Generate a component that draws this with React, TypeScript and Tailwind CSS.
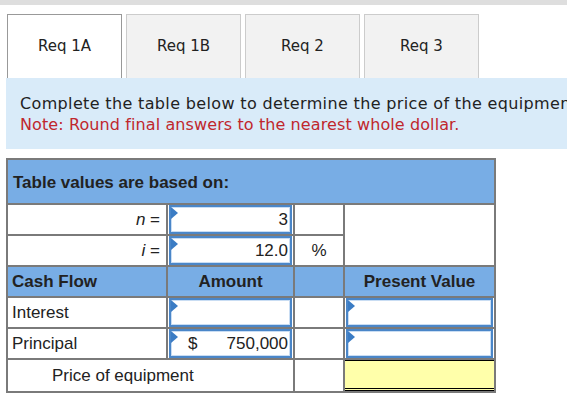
import React from "react";

const Tri = () => (
  <span className="absolute left-0 top-0 w-0 h-0 border-t-[6px] border-b-[6px] border-l-[7px] border-t-transparent border-b-transparent border-l-[#3b7cc4]" />
);

const InputBox = ({ children, className = "" }: { children?: React.ReactNode; className?: string }) => (
  <div className={`relative h-[29px] mx-px border-2 border-[#4a86c8] bg-white shadow-[inset_0_0_0_1px_#c9ddf3] flex items-center ${className}`}>
    <Tri />
    {children}
  </div>
);

const tabs = ["Req 1A", "Req 1B", "Req 2", "Req 3"];
const cell = "border-2 border-[#7a7a7a]";

export default function App() {
  return (
    <div className="w-[567px] h-[396px] bg-white overflow-hidden relative" style={{ fontFamily: '"Liberation Sans", Arial, sans-serif' }}>
      <div className="h-[5px] bg-[#dedede]" />
      <div className="flex gap-[4px] pl-[7px] mt-[9px]" style={{ fontFamily: '"DejaVu Sans", Verdana, sans-serif' }}>
        {tabs.map((t, i) => (
          <div
            key={t}
            className={`w-[115px] h-[64px] flex items-center justify-center text-[15px] text-[#222] border border-b-0 ${
              i === 0 ? "bg-white border-[#999]" : "bg-[#f2f2f2] border-[#ccc]"
            }`}
          >
            {t}
          </div>
        ))}
      </div>
      <div
        className="ml-[6px] h-[71px] bg-[#d9ebf9] pl-[14px] pt-[15px] text-[16px] leading-[21px] whitespace-nowrap overflow-hidden"
        style={{ fontFamily: '"DejaVu Sans", Verdana, sans-serif' }}
      >
        <div className="text-[#222] tracking-[0.35px]">Complete the table below to determine the price of the equipment.</div>
        <div className="text-[#c0272d] tracking-[0.1px]">Note: Round final answers to the nearest whole dollar.</div>
      </div>
      <table className="ml-[6px] mt-[9px] border-collapse table-fixed w-[488px] text-[17px] text-[#222] whitespace-nowrap">
        <colgroup>
          <col className="w-[160px]" />
          <col className="w-[127px]" />
          <col className="w-[50px]" />
          <col className="w-[151px]" />
        </colgroup>
        <tbody>
          <tr className="h-[45px] bg-[#78ade5]">
            <td colSpan={4} className={`${cell} px-[5px] pt-[2px] font-bold`}>Table values are based on:</td>
          </tr>
          <tr className="h-[31px]">
            <td className={`${cell} text-right pr-[6px]`}><i>n</i> =</td>
            <td className={`${cell} p-0`}><InputBox className="justify-end pr-[2px]">3</InputBox></td>
            <td className={cell}></td>
            <td rowSpan={2} className={cell}></td>
          </tr>
          <tr className="h-[31px]">
            <td className={`${cell} text-right pr-[6px]`}><i>i</i> =</td>
            <td className={`${cell} p-0`}><InputBox className="justify-end pr-[2px]">12.0</InputBox></td>
            <td className={`${cell} text-center`}>%</td>
          </tr>
          <tr className="h-[31px] bg-[#78ade5] font-bold">
            <td className={`${cell} px-[4px]`}>Cash Flow</td>
            <td className={`${cell} text-center`}>Amount</td>
            <td className={cell}></td>
            <td className={`${cell} text-center`}>Present Value</td>
          </tr>
          <tr className="h-[31px]">
            <td className={`${cell} px-[4px]`}>Interest</td>
            <td className={`${cell} p-0`}><InputBox /></td>
            <td className={cell}></td>
            <td className={`${cell} p-0`}><InputBox /></td>
          </tr>
          <tr className="h-[31px]">
            <td className={`${cell} px-[4px]`}>Principal</td>
            <td className={`${cell} p-0`}>
              <InputBox className="justify-between pl-[17px] pr-[2px]">
                <span>$</span>
                <span>750,000</span>
              </InputBox>
            </td>
            <td className={cell}></td>
            <td className={`${cell} p-0`}><InputBox /></td>
          </tr>
          <tr className="h-[31px]">
            <td colSpan={2} className={`${cell} pl-[44px]`}>Price of equipment</td>
            <td className={cell}></td>
            <td className={`${cell} p-0`}>
              <div className="h-[31px] bg-[#ffffaa] border-t border-t-black border-b-[3px] border-b-black border-double" />
            </td>
          </tr>
        </tbody>
      </table>
    </div>
  );
}
